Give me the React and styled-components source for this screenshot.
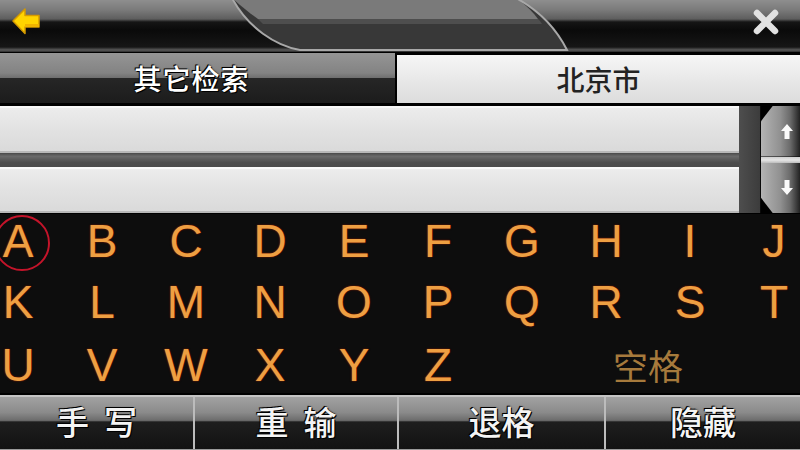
import React from 'react';
import styled, { createGlobalStyle, css } from 'styled-components';

const GlobalStyle = createGlobalStyle`
  html, body {
    margin: 0;
    padding: 0;
    background: #000;
  }
  body {
    width: 800px;
    height: 450px;
    overflow: hidden;
    font-family: "Liberation Sans", "Noto Sans CJK SC", sans-serif;
  }
`;

const Screen = styled.div`
  width: 800px;
  height: 450px;
  display: flex;
  flex-direction: column;
  background: #000;
`;

const Header = styled.header`
  position: relative;
  flex: none;
  height: 52px;
  box-sizing: border-box;
  padding: 8px 20px 0 12px;
  display: flex;
  justify-content: space-between;
  align-items: flex-start;
  background: linear-gradient(to bottom,
    #8e8e8e 0, #7a7a7a 10px, #5e5e5e 19px, #151515 22px,
    #0a0a0a 30px, #161616 47px, #5a5a5a 50px, #2a2a2a 52px);
`;

const Lens = styled.svg`
  position: absolute;
  left: 0;
  top: 0;
  display: block;
`;

const HeaderIcon = styled.svg`
  position: relative;
  z-index: 1;
`;

const TabRow = styled.div`
  flex: none;
  margin-top: 1px;
  height: 50px;
  display: grid;
  grid-template-columns: 395px 1fr;
  column-gap: 2px;
`;

const Tab = styled.div`
  display: flex;
  align-items: center;
  justify-content: center;
  font-family: "Noto Sans CJK SC", sans-serif;
  font-size: 28px;
  font-weight: 500;
  ${({ $active }) => $active ? css`
    margin-top: 2px;
    color: #222;
    background: linear-gradient(to bottom, #f6f6f6, #e6e6e6 60%, #dcdcdc);
  ` : css`
    padding-right: 12px;
    color: #fff;
    letter-spacing: 1px;
    text-shadow: 0 0 2px #000, 1px 1px 0 #000, -1px -1px 0 #000;
    background: linear-gradient(to bottom,
      #959595 0, #838383 40%, #707070 49%, #262626 51%, #1c1c1c 100%);
  `}
`;

const InputArea = styled.div`
  flex: none;
  margin-top: 3px;
  height: 107px;
  display: flex;
`;

const Fields = styled.div`
  width: 739px;
  display: flex;
  flex-direction: column;
  justify-content: space-between;
  background: linear-gradient(to bottom,
    #3a3a3a 0, #4a4a4a 44%, #6a6a6a 47%, #5a5a5a 50%, #4c4c4c 53%, #3a3a3a 100%);
`;

const Field = styled.div`
  height: ${({ $h }) => $h}px;
  box-sizing: border-box;
  border-top: 2px solid #f8f8f8;
  border-bottom: 2px solid #b8b8b8;
  background: linear-gradient(to bottom, #ececec, #e2e2e2 50%, #dadada);
`;

const Rail = styled.div`
  width: 21px;
  border-right: 1px solid #0a0a0a;
  background: linear-gradient(to right, #4e4e4e, #3c3c3c);
`;

const ScrollCol = styled.div`
  flex: 1;
  display: flex;
  flex-direction: column;
`;

const ScrollButton = styled.div`
  flex: 1;
  display: flex;
  align-items: center;
  justify-content: flex-end;
  padding-right: 7px;
  background: linear-gradient(to right, #b4b4b4, #909090 50%, #6a6a6a 75%, #222 100%);
  clip-path: ${({ $down }) => $down
    ? 'polygon(0 0, 100% 0, 100% 100%, 30% 100%, 0 70%)'
    : 'polygon(0 30%, 30% 0, 100% 0, 100% 100%, 0 100%)'};
`;

const ScrollDivider = styled.div`
  height: 6px;
  background: linear-gradient(to bottom, #cfcfcf, #e6e6e6, #bdbdbd);
`;

const Keyboard = styled.div`
  flex: none;
  margin-top: 1px;
  height: 179px;
  padding-right: 8px;
  display: grid;
  grid-template-columns: repeat(10, 36px);
  grid-template-rows: 54px 68px 57px;
  justify-content: space-between;
  background: #0d0d0d;
`;

const Key = styled.div`
  position: relative;
  display: flex;
  align-items: center;
  justify-content: center;
  line-height: 1;
  font-family: "Liberation Sans", sans-serif;
  font-size: 46px;
  color: #ee9f42;
  text-shadow: 0 0 2px #6a1800, 0 0 1px #8a2400;

  ${({ $selected }) => $selected && css`
    &::before {
      content: "";
      position: absolute;
      left: 50%;
      top: 50%;
      width: 52px;
      height: 52px;
      margin: -26px 0 0 -24px;
      border: 2px solid #c4142a;
      border-radius: 50%;
    }
  `}
`;

const SpaceKey = styled.div`
  grid-column: 8 / span 2;
  display: flex;
  align-items: center;
  justify-content: center;
  font-family: "Noto Sans CJK SC", sans-serif;
  font-size: 35px;
  font-weight: 400;
  color: #a67a3c;
`;

const BottomBar = styled.div`
  flex: none;
  margin-top: 2px;
  height: 55px;
  box-sizing: border-box;
  border-top: 2px solid #c4c4c4;
  border-bottom: 3px solid #9a9a9a;
  display: grid;
  grid-template-columns: 193px 204px 207px 1fr;
`;

const BarButton = styled.div`
  display: flex;
  align-items: center;
  justify-content: center;
  padding-bottom: 4px;
  font-family: "Noto Sans CJK SC", sans-serif;
  font-size: 33px;
  font-weight: 500;
  color: #f4f4f4;
  white-space: pre;
  text-shadow: 0 0 2px #000, 1px 1px 0 #000, -1px -1px 0 #000;
  background: linear-gradient(to bottom,
    #a2a2a2 0, #8a8a8a 30%, #6c6c6c 45%, #1e1e1e 48%, #121212 100%);
  & + & {
    border-left: 2px solid #bcbcbc;
  }
`;

const letters = [
  ['A', 'B', 'C', 'D', 'E', 'F', 'G', 'H', 'I', 'J'],
  ['K', 'L', 'M', 'N', 'O', 'P', 'Q', 'R', 'S', 'T'],
  ['U', 'V', 'W', 'X', 'Y', 'Z'],
];

const actions = ['手  写', '重  输', '退格', '隐藏'];

const BackArrow = () => (
  <HeaderIcon width="28" height="27" viewBox="0 0 28 27">
    <path d="M1 13 L13 1 L13 7.5 L27 7.5 L27 19 L13 19 L13 25.5 Z"
      fill="#ffd400" stroke="#d59a00" strokeWidth="1.5" strokeLinejoin="round" />
    <path d="M13 19 L27 19 L27 16 L13 16 Z" fill="#f0b400" />
  </HeaderIcon>
);

const CloseIcon = () => (
  <HeaderIcon width="28" height="28" viewBox="0 0 28 28">
    <path d="M5 5 L23 23 M23 5 L5 23" stroke="#e2e2e2" strokeWidth="6.5" strokeLinecap="round" />
  </HeaderIcon>
);

const ScrollArrow = ({ down }) => (
  <svg width="12" height="15" viewBox="0 0 12 15">
    <path
      d={down
        ? 'M6 15 L12 8 L8.5 8 L8.5 0 L3.5 0 L3.5 8 L0 8 Z'
        : 'M6 0 L12 7 L8.5 7 L8.5 15 L3.5 15 L3.5 7 L0 7 Z'}
      fill="#fafafa" />
  </svg>
);

// lens outline shared by the fill layers
const lensPath = 'M232 -2 C 248 28, 276 46, 300 50 L 567 50 C 556 28, 538 10, 516 -2 Z';

export default function App() {
  return (
    <Screen>
      <GlobalStyle />
      <Header>
        <Lens width="800" height="52" viewBox="0 0 800 52">
          <path d={lensPath} fill="#383838" />
          <path d="M232 -2 L 516 -2 C 526 5, 533 12, 538 19 L 258 19 C 248 12, 240 5, 232 -2 Z" fill="#7a7a7a" />
          <path d="M258 19 L 538 19 C 540 21, 541 22, 542 24 L 263 24 Z" fill="#4e4e4e" />
          <path d={lensPath} fill="none" stroke="#a8a8a8" strokeWidth="2" />
        </Lens>
        <BackArrow />
        <CloseIcon />
      </Header>

      <TabRow>
        <Tab>其它检索</Tab>
        <Tab $active>北京市</Tab>
      </TabRow>

      <InputArea>
        <Fields>
          <Field $h={47} />
          <Field $h={46} />
        </Fields>
        <Rail />
        <ScrollCol>
          <ScrollButton>
            <ScrollArrow />
          </ScrollButton>
          <ScrollDivider />
          <ScrollButton $down>
            <ScrollArrow down />
          </ScrollButton>
        </ScrollCol>
      </InputArea>

      <Keyboard>
        {letters.flat().map((ch) => (
          <Key key={ch} $selected={ch === 'A'}>{ch}</Key>
        ))}
        <SpaceKey>空格</SpaceKey>
      </Keyboard>

      <BottomBar>
        {actions.map((label) => (
          <BarButton key={label}>{label}</BarButton>
        ))}
      </BottomBar>
    </Screen>
  );
}
